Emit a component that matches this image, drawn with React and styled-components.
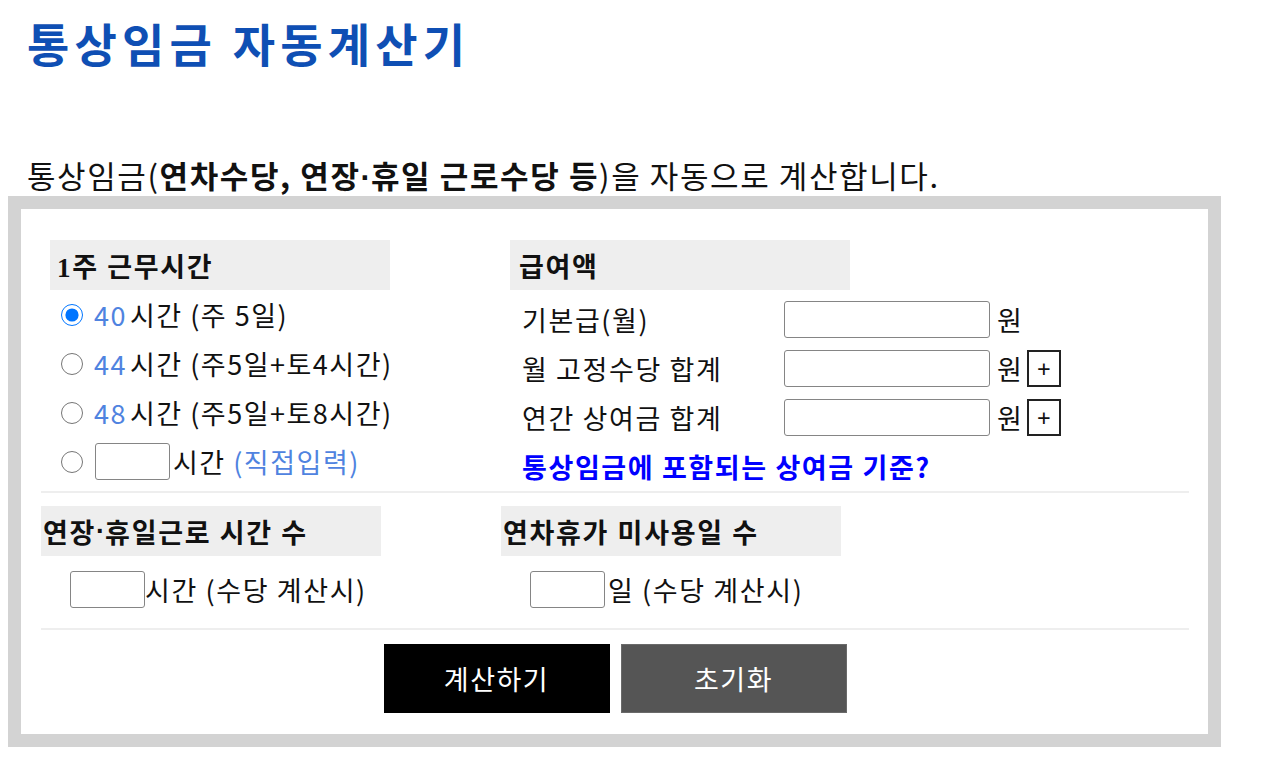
import styled, { createGlobalStyle } from "styled-components";

const GlobalStyle = createGlobalStyle`
    body {
        margin: 8px;
        font-family: "Noto Sans CJK KR", "Noto Sans", sans-serif;
        color: #111;
        background: #fff;
    }
`;

const Styles = {
    Title: styled.h1`
        margin: 11px 0 0;
        padding-left: 19px;
        font-size: 46px;
        line-height: 46px;
        font-weight: 700;
        letter-spacing: 5.2px;
        color: #0f4fb4;
    `,
    Intro: styled.p`
        margin: 95px 0 6px;
        padding-left: 19px;
        height: 30px;
        font-size: 31px;
        line-height: 30px;
        letter-spacing: 1.6px;
        white-space: nowrap;
        b {
            font-weight: 700;
        }
    `,
    Dot: styled.span`
        font-family: "Liberation Sans", sans-serif;
        font-weight: 700;
        letter-spacing: 0;
        line-height: 1;
    `,
    Frame: styled.div`
        width: 1213px;
        box-sizing: border-box;
        border: 13px solid #d3d3d3;
        padding: 0 19px 0 20px;
        background: #fff;
    `,
    Top: styled.div`
        display: flex;
        padding: 31px 9px 0;
    `,
    Column: styled.div`
        width: 460px;
        flex-shrink: 0;
    `,
    Header: styled.div`
        width: 340px;
        height: 50px;
        box-sizing: border-box;
        padding-left: ${(p) => p.$pad ?? 7}px;
        display: flex;
        align-items: center;
        background: #eeeeee;
        font-family: "Liberation Serif", "Noto Sans CJK KR", serif;
        font-size: 27px;
        font-weight: 700;
        letter-spacing: 1.7px;
        white-space: nowrap;
    `,
    RadioRow: styled.label`
        display: flex;
        align-items: center;
        height: 49px;
        padding-left: 11px;
        font-size: 27px;
        letter-spacing: 1.5px;
        white-space: nowrap;
    `,
    Radio: styled.input`
        width: 22px;
        height: 22px;
        margin: 0 11px 0 0;
    `,
    Blue: styled.span`
        color: #4f83e0;
        margin-right: ${(p) => p.$gap || 0}px;
    `,
    BoxInput: styled.input`
        width: ${(p) => p.$w || 75}px;
        height: 37px;
        box-sizing: border-box;
        margin: ${(p) => p.$m || "0"};
        border: 1px solid #858585;
        border-radius: 3px;
        font-size: 20px;
        padding: 0 6px;
    `,
    Fields: styled.div`
        display: grid;
        grid-template-columns: 274px auto auto 1fr;
        grid-auto-rows: 49px;
        align-items: center;
        margin-top: 5px;
    `,
    Label: styled.span`
        padding-left: 12px;
        font-size: 27px;
        letter-spacing: 1.6px;
        white-space: nowrap;
    `,
    Unit: styled.span`
        font-size: 27px;
        padding-left: 7px;
    `,
    PlusButton: styled.button`
        width: 34px;
        height: 37px;
        margin-left: 5px;
        padding: 0;
        border: 2px solid #222;
        background: #fff;
        font-size: 24px;
        line-height: 28px;
        font-family: "Noto Sans", sans-serif;
        color: #111;
        vertical-align: middle;
    `,
    Link: styled.a`
        grid-column: 1 / -1;
        padding-left: 12px;
        font-size: 27px;
        font-weight: 700;
        letter-spacing: 1.6px;
        color: #0000ff;
        text-decoration: none;
    `,
    Middle: styled.div`
        display: flex;
        border-top: 2px solid #eeeeee;
        padding-top: 13px;
    `,
    InputRow: styled.div`
        display: flex;
        align-items: center;
        padding: 14px 0 19px 29px;
        font-size: 27px;
        letter-spacing: 1.6px;
        white-space: nowrap;
    `,
    ButtonBar: styled.div`
        display: flex;
        justify-content: center;
        gap: 11px;
        border-top: 2px solid #eeeeee;
        padding: 14px 0 21px;
    `,
    ActionButton: styled.button`
        width: 226px;
        height: 69px;
        border: 1px solid ${(p) => (p.$dark ? "#000" : "#6a6a6a")};
        background: ${(p) => (p.$dark ? "#000" : "#555555")};
        color: #fff;
        font-family: "Noto Sans CJK KR", sans-serif;
        font-size: 27px;
        letter-spacing: 1.5px;
    `,
};

const hours = [
    { value: "40", text: "시간 (주 5일)" },
    { value: "44", text: "시간 (주5일+토4시간)" },
    { value: "48", text: "시간 (주5일+토8시간)" },
];

function App() {
    const {
        Title, Intro, Dot, Frame, Top, Column, Header, RadioRow, Radio, Blue, BoxInput,
        Fields, Label, Unit, PlusButton, Link, Middle, InputRow, ButtonBar, ActionButton,
    } = Styles;

    return (
        <>
            <GlobalStyle />
            <Title>통상임금 자동계산기</Title>
            <Intro>
                통상임금(<b>연차수당, 연장<Dot>·</Dot>휴일 근로수당 등</b>)을 자동으로 계산합니다.
            </Intro>
            <Frame>
                <Top>
                    <Column>
                        <Header>1주 근무시간</Header>
                        {hours.map((h, i) => (
                            <RadioRow key={h.value}>
                                <Radio type="radio" name="hours" defaultChecked={i === 0} />
                                <Blue $gap={3}>{h.value}</Blue>
                                {h.text}
                            </RadioRow>
                        ))}
                        <RadioRow>
                            <Radio type="radio" name="hours" />
                            <BoxInput $m="0 3px 0 1px" />
                            시간&nbsp;<Blue>(직접입력)</Blue>
                        </RadioRow>
                    </Column>
                    <Column>
                        <Header $pad={9}>급여액</Header>
                        <Fields>
                            <Label>기본급(월)</Label>
                            <BoxInput $w={206} />
                            <Unit>원</Unit>
                            <span />

                            <Label>월 고정수당 합계</Label>
                            <BoxInput $w={206} />
                            <Unit>원</Unit>
                            <span><PlusButton>+</PlusButton></span>

                            <Label>연간 상여금 합계</Label>
                            <BoxInput $w={206} />
                            <Unit>원</Unit>
                            <span><PlusButton>+</PlusButton></span>

                            <Link href="#">통상임금에 포함되는 상여금 기준?</Link>
                        </Fields>
                    </Column>
                </Top>
                <Middle>
                    <Column>
                        <Header $pad={2}>연장<Dot>·</Dot>휴일근로 시간 수</Header>
                        <InputRow>
                            <BoxInput />
                            시간 (수당 계산시)
                        </InputRow>
                    </Column>
                    <Column>
                        <Header $pad={2}>연차휴가 미사용일 수</Header>
                        <InputRow>
                            <BoxInput $m="0 3px 0 0" />
                            일 (수당 계산시)
                        </InputRow>
                    </Column>
                </Middle>
                <ButtonBar>
                    <ActionButton $dark>계산하기</ActionButton>
                    <ActionButton>초기화</ActionButton>
                </ButtonBar>
            </Frame>
        </>
    );
}

export default App;
